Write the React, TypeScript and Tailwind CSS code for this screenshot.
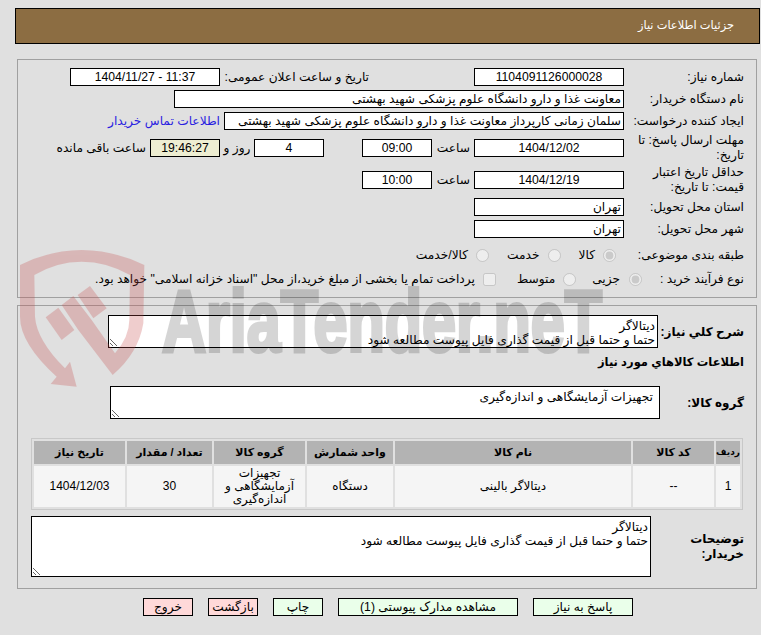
import React from 'react';

const Field = ({ w, children, center, bg }: { w: string; children?: React.ReactNode; center?: boolean; bg?: string }) => (
  <div
    className={`${w} h-[18px] shrink-0 border border-black leading-[16px] px-[2px] whitespace-nowrap overflow-hidden ${center ? 'text-center' : 'text-right'} ${bg ?? 'bg-white'}`}
  >
    {children}
  </div>
);

const Radio = ({ checked, className }: { checked?: boolean; className?: string }) => (
  <input type="radio" disabled checked={!!checked} readOnly className={`w-[13px] h-[13px] m-0 shrink-0 ${className ?? ''}`} />
);

const Note = ({ className, value }: { className: string; value: string }) => (
  <textarea
    readOnly
    dir="rtl"
    value={value}
    className={`block shrink-0 border border-black bg-white pt-[3px] text-[12.2px] leading-[14px] text-black ${className}`}
  />
);

const Th = ({ w, children }: { w: string; children: React.ReactNode }) => (
  <th className={`${w} h-[23px] bg-[#b3b3b3] p-0 text-center font-bold`}>{children}</th>
);

const Td = ({ children }: { children: React.ReactNode }) => (
  <td className="h-[41px] bg-[#f5f5f5] p-0 text-center text-[12px] leading-[13px]">{children}</td>
);

const Btn = ({ w, pink, children }: { w: string; pink?: boolean; children: React.ReactNode }) => (
  <button className={`${w} h-[18px] border border-black text-center leading-[16px] text-[12.2px] ${pink ? 'bg-[#ffd9d9]' : 'bg-[#eaffea]'}`}>
    {children}
  </button>
);

const note = 'دیتالاگر\nحتما و حتما قبل از قیمت گذاری فایل پیوست مطالعه شود';

export default function App() {
  return (
    <div
      dir="rtl"
      className="relative h-[635px] w-[761px] overflow-hidden bg-[#e0e0e0] text-[12.2px] text-black font-['Liberation_Sans','DejaVu_Sans',sans-serif]"
    >
      <div className="relative flex flex-col">
        {/* header */}
        <div className="ml-[15px] mr-px mt-2 flex h-[36px] items-center border border-black bg-[#8c6d42] pr-[25px] text-[11.4px] text-white">
          جزئیات اطلاعات نیاز
        </div>

        {/* details */}
        <div className="mr-[4px] ml-[17px] mt-[15px] flex flex-col border border-[#a0a0a0] pb-[9px] pr-[12px] pt-2">
          <div className="flex h-[18px] items-center">
            <div className="w-[120px] shrink-0">شماره نیاز:</div>
            <Field w="w-[150px]" center>1104091126000028</Field>
            <div className="mr-[105px] w-[149px] shrink-0 whitespace-nowrap">تاریخ و ساعت اعلان عمومی:</div>
            <Field w="w-[150px]" center><span dir="ltr">1404/11/27 - 11:37</span></Field>
          </div>
          <div className="mt-1 flex h-[18px] items-center">
            <div className="w-[120px] shrink-0">نام دستگاه خریدار:</div>
            <Field w="w-[450px]">معاونت غذا و دارو دانشگاه علوم پزشکی شهید بهشتی</Field>
          </div>
          <div className="mt-1 flex h-[18px] items-center">
            <div className="w-[120px] shrink-0 whitespace-nowrap">ایجاد کننده درخواست:</div>
            <Field w="w-[400px]">سلمان زمانی کارپرداز معاونت غذا و دارو دانشگاه علوم پزشکی شهید بهشتی</Field>
            <a className="mr-1 whitespace-nowrap text-[#2a1ee0]">اطلاعات تماس خریدار</a>
          </div>
          <div className="mt-[3px] flex h-[30px] items-center">
            <div className="w-[120px] shrink-0 leading-[15px]">مهلت ارسال پاسخ: تا تاریخ:</div>
            <Field w="w-[150px]" center>1404/12/02</Field>
            <div className="w-[42px] shrink-0 pr-1">ساعت</div>
            <Field w="w-[70px]" center>09:00</Field>
            <Field w="mr-[38px] w-[70px]" center>4</Field>
            <div className="w-[34px] shrink-0 text-center">روز و</div>
            <Field w="w-[70px]" center bg="bg-[#eeeed2]">19:46:27</Field>
            <div className="mr-1 whitespace-nowrap">ساعت باقی مانده</div>
          </div>
          <div className="mt-[2px] flex h-[30px] items-center">
            <div className="w-[120px] shrink-0 leading-[15px]">حداقل تاریخ اعتبار قیمت: تا تاریخ:</div>
            <Field w="w-[150px]" center>1404/12/19</Field>
            <div className="w-[42px] shrink-0 pr-1">ساعت</div>
            <Field w="w-[70px]" center>10:00</Field>
          </div>
          <div className="mt-[3px] flex h-[18px] items-center">
            <div className="w-[120px] shrink-0">استان محل تحویل:</div>
            <Field w="w-[150px]">تهران</Field>
          </div>
          <div className="mt-1 flex h-[18px] items-center">
            <div className="w-[120px] shrink-0">شهر محل تحویل:</div>
            <Field w="w-[150px]">تهران</Field>
          </div>
          <div className="mt-2 flex h-[18px] items-center">
            <div className="w-[120px] shrink-0">طبقه بندی موضوعی:</div>
            <Radio checked className="mr-[8px]" />
            <span className="mr-[8px]">کالا</span>
            <Radio className="mr-[18px]" />
            <span className="mr-[8px]">خدمت</span>
            <Radio className="mr-[18px]" />
            <span className="mr-[8px]">کالا/خدمت</span>
          </div>
          <div className="mt-[6px] flex h-[18px] items-center">
            <div className="w-[102px] shrink-0 whitespace-nowrap">نوع فرآیند خرید :</div>
            <Radio checked />
            <span className="mr-[9px]">جزیی</span>
            <Radio className="mr-[16px]" />
            <span className="mr-[8px]">متوسط</span>
            <input type="checkbox" disabled className="mr-[21px] h-[13px] w-[13px] shrink-0" />
            <span className="mr-[8px] whitespace-nowrap">
              پرداخت تمام یا بخشی از مبلغ خرید،از محل "اسناد خزانه اسلامی" خواهد بود.
            </span>
          </div>
        </div>

        {/* goods */}
        <div className="mr-[4px] ml-[17px] mt-[7px] flex flex-col border border-[#a0a0a0] pb-[11px] pr-[12px] pt-[9px]">
          <div className="flex items-center">
            <div className="w-[86px] shrink-0 text-[12px] font-bold">شرح کلي نیاز:</div>
            <Note className="h-[33px] w-[550px] px-[2px]" value={note} />
          </div>
          <div className="mt-[7px] h-[15px] text-[11.5px] leading-[15px] font-bold">اطلاعات کالاهاي مورد نیاز</div>
          <div className="mt-[16px] flex items-center">
            <div className="w-[84px] shrink-0 text-[12px] font-bold">گروه کالا:</div>
            <Note className="h-[33px] w-[550px] px-[6px]" value="تجهیزات آزمایشگاهی و اندازه‌گیری" />
          </div>
          <table className="mr-px mt-[19px] w-[712px] table-fixed border-separate border-spacing-[2px] border border-[#c8c8c8] text-[11px]">
            <thead>
              <tr>
                <Th w="w-[24px] text-[9px]">ردیف</Th>
                <Th w="w-[81px]">کد کالا</Th>
                <Th w="w-[236px]">نام کالا</Th>
                <Th w="w-[86px]">واحد شمارش</Th>
                <Th w="w-[91px]">گروه کالا</Th>
                <Th w="w-[85px]">تعداد / مقدار</Th>
                <Th w="w-[91px]">تاریخ نیاز</Th>
              </tr>
            </thead>
            <tbody>
              <tr>
                <Td>1</Td>
                <Td>--</Td>
                <Td>دیتالاگر بالینی</Td>
                <Td>دستگاه</Td>
                <Td>تجهیزات آزمایشگاهی و اندازه‌گیری</Td>
                <Td>30</Td>
                <Td>1404/12/03</Td>
              </tr>
            </tbody>
          </table>
          <div className="mt-[6px] flex items-center">
            <div className="w-[93px] shrink-0 text-[12px] font-bold leading-[15px]">توضیحات خریدار:</div>
            <Note className="h-[61px] w-[620px] px-[2px]" value={note} />
          </div>
        </div>

        {/* actions */}
        <div className="mt-[9px] flex gap-[15px] pr-[128px]">
          <Btn w="w-[100px]">پاسخ به نیاز</Btn>
          <Btn w="w-[180px]">مشاهده مدارک پیوستی (1)</Btn>
          <Btn w="w-[50px]">چاپ</Btn>
          <Btn w="w-[50px]" pink>بازگشت</Btn>
          <Btn w="w-[50px]" pink>خروج</Btn>
        </div>
      </div>

      {/* watermark sits over the page, translucent */}
      <svg className="pointer-events-none absolute left-[10px] top-[240px]" width="150" height="160" viewBox="0 0 450 480">
        <g fill="#c54a4a" opacity="0.27">
          <path d="M30 75 Q120 30 215 30 Q310 30 403 75 L400 250 Q385 340 308 405 L205 270 L155 195 L190 168 L245 240 L315 340 Q358 290 358 240 L360 105 Q290 65 215 65 Q140 65 73 105 L75 230 Q80 300 165 385 L180 365 L200 440 L122 432 L140 410 Q30 310 30 230 Z" />
          <polygon points="203,165 240,138 290,205 250,235" />
          <polygon points="107,232 145,203 193,270 155,300" />
        </g>
      </svg>
      <svg className="pointer-events-none absolute left-[150px] top-[260px]" width="470" height="100" viewBox="0 0 470 100">
        <g opacity="0.16" fill="#000" stroke="#000" strokeWidth="4">
          <text x="12" y="91" fontSize="88" fontFamily="Liberation Sans" fontWeight="bold" textLength="440" lengthAdjust="spacingAndGlyphs" direction="ltr">
            AriaTender.neT
          </text>
        </g>
      </svg>
    </div>
  );
}
